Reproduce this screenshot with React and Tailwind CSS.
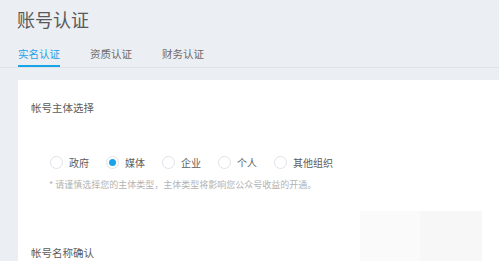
import React from "react";

const options = ["政府", "媒体", "企业", "个人", "其他组织"];

const Radio = ({ label, checked }) => (
  <label className="flex items-center mr-[17px]">
    <span className="w-[13px] h-[13px] rounded-full border border-[#dfe2e6] bg-white flex items-center justify-center">
      {checked && <span className="w-[7px] h-[7px] rounded-full bg-[#1aa3e8]" />}
    </span>
    <span className="ml-[6px] text-[10px] leading-[13px] text-[#5c5c5c]">{label}</span>
  </label>
);

export default function App() {
  return (
    <div
      className="w-[499px] h-[261px] overflow-hidden bg-[#ebeef3]"
      style={{ fontFamily: '"Noto Sans CJK SC", "Noto Sans", sans-serif' }}
    >
      {/* HEADER */}
      <h1 className="pl-[17px] pt-[8px] text-[18px] leading-[22px] h-[30px] text-[#595959]">
        账号认证
      </h1>

      {/* TABS */}
      <div className="mt-[17px] flex border-b border-[#dfe3e8] pl-[18px] h-[21px]">
        <div className="relative h-full text-[10.5px] leading-[14px] text-[#1aa3e8]">
          实名认证
          <span className="absolute left-0 right-0 bottom-0 h-[2px] bg-[#1aa3e8]" />
        </div>
        <div className="ml-[30px] text-[10.5px] leading-[14px] text-[#6b6b6b]">资质认证</div>
        <div className="ml-[30px] text-[10.5px] leading-[14px] text-[#6b6b6b]">财务认证</div>
      </div>

      {/* PANEL */}
      <div className="relative ml-[18px] mt-[12px] bg-white h-[181px] pl-[13px] pt-[21px]">
        <p className="text-[10.5px] leading-[14px] text-[#5c5c5c]">帐号主体选择</p>

        <div className="flex items-center mt-[41px] pl-[19px]">
          {options.map((o) => (
            <Radio key={o} label={o} checked={o === "媒体"} />
          ))}
        </div>

        <p className="mt-[10px] pl-[18px] text-[9px] leading-[12px] text-[#b3b3b3]">
          * 请谨慎选择您的主体类型，主体类型将影响您公众号收益的开通。
        </p>

        <p className="mt-[55px] text-[10.5px] leading-[14px] text-[#5c5c5c]">帐号名称确认</p>

        {/* faint overlay block */}
        <div className="absolute left-[342px] top-[131px] w-[122px] h-[50px] flex">
          <div className="w-[60px] bg-[#fafafa]" />
          <div className="flex-1 bg-[#f7f7f7]" />
        </div>
      </div>
    </div>
  );
}
